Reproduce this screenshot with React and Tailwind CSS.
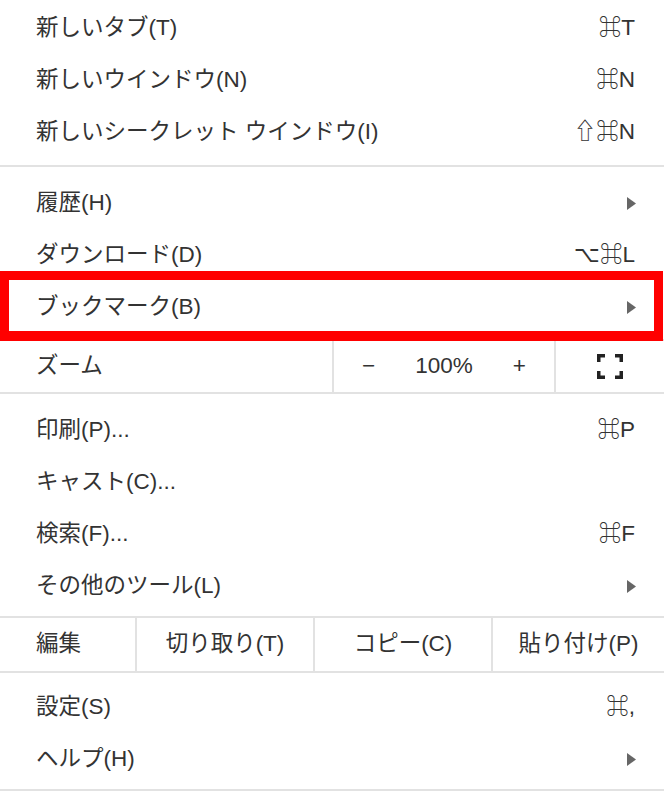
import React from "react";

const FONT =
  "font-['Liberation_Sans','Noto_Sans_CJK_JP','DejaVu_Sans',sans-serif]";

const Arrow = () => (
  <svg width="9" height="13" viewBox="0 0 9 13" className="block">
    <polygon points="0,0 9,6.5 0,13" fill="#666666" />
  </svg>
);

const FullscreenIcon = () => (
  <svg width="26" height="25" viewBox="0 0 26 25" fill="none" className="block">
    <path
      d="M1.75 8V1.75H8 M18 1.75H24.25V8 M1.75 17V23.25H8 M18 23.25H24.25V17"
      stroke="#222222"
      strokeWidth="3.5"
    />
  </svg>
);

const MenuItem = ({ label, shortcut, submenu, children }) => (
  <div className="relative flex h-[52px] items-center justify-between pl-[36px] pr-[28px]">
    <span>{label}</span>
    {submenu ? (
      <Arrow />
    ) : (
      <span className="pr-[1px]">{shortcut}</span>
    )}
    {children}
  </div>
);

const Separator = () => <div className="h-[2px] bg-[#e2e2e2]" />;

export default function App() {
  return (
    <div
      className={`w-[664px] h-[791px] overflow-hidden bg-white text-[22.5px] leading-none text-[#333333] ${FONT}`}
    >
      {/* new tab / window */}
      <div className="pt-[2px] pb-[7px]">
        <MenuItem label="新しいタブ(T)" shortcut="⌘T" />
        <MenuItem label="新しいウインドウ(N)" shortcut="⌘N" />
        <MenuItem label="新しいシークレット ウインドウ(I)" shortcut="⇧⌘N" />
      </div>
      <Separator />

      {/* history, downloads, bookmarks */}
      <div className="pt-[10px] pb-[6px]">
        <MenuItem label="履歴(H)" submenu />
        <MenuItem label="ダウンロード(D)" shortcut="⌥⌘L" />
        <MenuItem label="ブックマーク(B)" submenu>
          <div className="pointer-events-none absolute left-0 right-[1px] -top-[10px] -bottom-[8px] border-[9px] border-b-[10px] border-[#ff0000]" />
        </MenuItem>
      </div>

      {/* zoom */}
      <div className="flex h-[55px] border-y-2 border-[#e2e2e2]">
        <div className="flex w-[332px] items-center pl-[36px]">ズーム</div>
        <div className="flex w-[222px] items-center justify-between border-l-2 border-[#e2e2e2] px-[28px]">
          <span>−</span>
          <span>100%</span>
          <span>+</span>
        </div>
        <div className="flex flex-1 items-center justify-center border-l-2 border-[#e2e2e2]">
          <FullscreenIcon />
        </div>
      </div>

      {/* print, cast, find, tools */}
      <div className="pt-[10px] pb-[4px]">
        <MenuItem label="印刷(P)..." shortcut="⌘P" />
        <MenuItem label="キャスト(C)..." />
        <MenuItem label="検索(F)..." shortcut="⌘F" />
        <MenuItem label="その他のツール(L)" submenu />
      </div>

      {/* edit */}
      <div className="flex h-[57px] border-y-2 border-[#e2e2e2]">
        <div className="flex w-[135px] items-center pl-[36px]">編集</div>
        <div className="flex w-[178px] items-center justify-center border-l-2 border-[#e2e2e2]">
          切り取り(T)
        </div>
        <div className="flex w-[178px] items-center justify-center border-l-2 border-[#e2e2e2]">
          コピー(C)
        </div>
        <div className="flex flex-1 items-center justify-center border-l-2 border-[#e2e2e2]">
          貼り付け(P)
        </div>
      </div>

      {/* settings, help */}
      <div className="pt-[8px] pb-[4px]">
        <MenuItem label="設定(S)" shortcut="⌘," />
        <MenuItem label="ヘルプ(H)" submenu />
      </div>
      <Separator />
    </div>
  );
}
